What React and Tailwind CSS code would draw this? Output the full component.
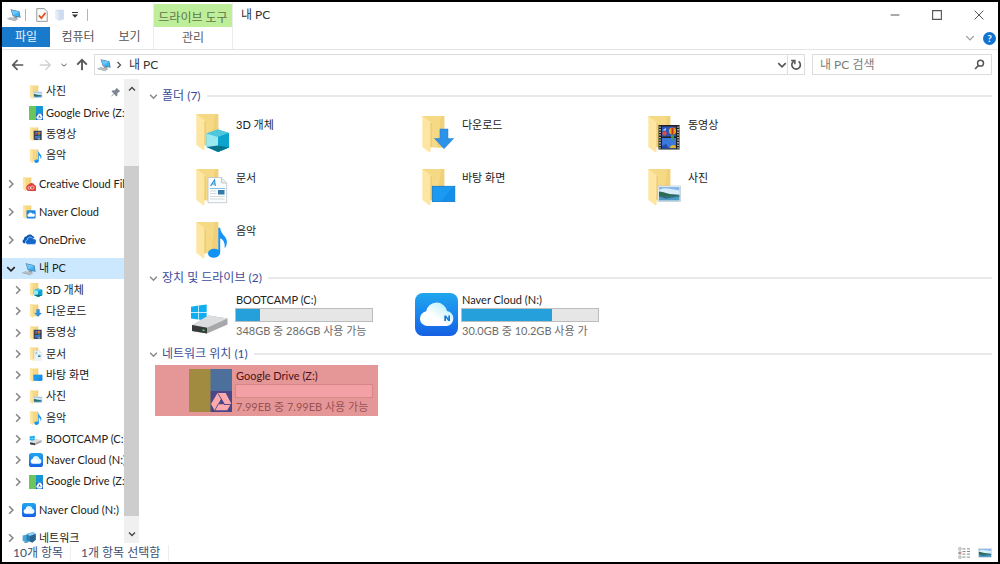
import React from "react";

function Svg({ box = "0 0 16 16", className, children }) {
  return (
    <svg viewBox={box} className={className} fill="none" aria-hidden="true">
      {children}
    </svg>
  );
}

/* ---------- folder emblems, drawn on a 43 x 43 canvas ---------- */

function CubeEmblem() {
  return (
    <g>
      <path d="M29 18.500 40 22v14.500L29 41 17.500 36V22.500z" fill="#1fb5d2" />
      <path d="M17.500 22.500 29 18.500 40 22 29 26z" fill="#4fc6df" />
      <path d="M17.500 22.500 29 26v15l-11.500-5z" fill="#9be9f0" />
      <path d="M29 26 40 22v14.500L29 41z" fill="#0da3cf" />
      <path d="M29 34.500 40 36.500 29 41 17.500 36z" fill="#08748c" />
    </g>
  );
}

function ArrowEmblem() {
  return <path d="M25 18h8v9.500h5.700L29 37.700 19.500 27.500H25z" fill="#2d93e8" stroke="#1f7fd0" strokeWidth="0.5" />;
}

function FilmEmblem() {
  return (
    <g>
      <rect x="17.500" y="14" width="21" height="24.500" fill="#20201f" />
      <path d="M19 15.500v22M37 15.500v22" stroke="#f3f3f3" strokeWidth="1.300" strokeDasharray="1.300 1.300" />
      <rect x="21" y="15.500" width="14" height="10" fill="#2a56bb" />
      <rect x="21" y="27" width="14" height="10.500" fill="#3a78dc" />
      <circle cx="31.500" cy="20" r="3.600" fill="#e8a21c" />
      <path d="M30.500 16.500h2v6.500l-1 1-1-1z" fill="#c9302c" />
      <path d="M30 24h3v4l-1.500 1.500L30 28z" fill="#3e9b45" />
      <circle cx="23.500" cy="22.500" r="2.200" fill="#dd4b3d" />
      <path d="M21 19.500 25 17v2.500z" fill="#b8cdf3" />
      <path d="M29 37c0-4 6-4 6 0z" fill="#e5b62b" />
      <path d="M21 35l4-2 3 4.500h-7z" fill="#234aa3" />
    </g>
  );
}

function DocumentEmblem() {
  return (
    <g>
      <path d="M19 13.500h13.500L37.700 19v19.700H19z" fill="#fafcfd" stroke="#b9c2c7" strokeWidth="0.800" />
      <path d="M32.500 13.500V19h5.200" fill="#e6edf0" stroke="#b9c2c7" strokeWidth="0.800" />
      <path d="M21.500 22 25.500 16l.8 6M23 20h3.200" stroke="#2090d0" strokeWidth="1.100" />
      <path d="M21 24.500h15" stroke="#7cc2e4" strokeWidth="1" />
      <rect x="29" y="26" width="6.500" height="4.500" fill="#2f7ba8" />
      <path d="M21 27h6.500M21 29.500h6.500M21 32.500h14.500M21 35h14.500" stroke="#cfd6da" strokeWidth="0.900" />
    </g>
  );
}

function DesktopEmblem() {
  return (
    <g>
      <rect x="17.300" y="22.300" width="22.500" height="15.300" fill="#1c9af2" stroke="#0f78c8" strokeWidth="0.800" />
      <path d="M26 37.300 38 22.700h1.500v14.600z" fill="#0c89e6" opacity="0.600" />
    </g>
  );
}

function PhotoEmblem() {
  return (
    <g>
      <rect x="17" y="22" width="22.500" height="15.500" fill="#f4f7f8" stroke="#b9c6cc" strokeWidth="0.700" />
      <rect x="18" y="23" width="20.500" height="9" fill="#86b8ee" />
      <path d="M18 26c4-2.500 8-2 12-1l8.500 1.500V30H18z" fill="#d8ecf9" />
      <path d="M18 27.500c3 0 6 1.500 9.500 2.200 3 .7 7 1 11 1.800v1.500H18z" fill="#2c6a52" />
      <path d="M18 32.500h20.500v4H18z" fill="#4b9ac6" />
      <path d="M18 32.500h20.500l-14 2z" fill="#2e6474" />
    </g>
  );
}

function MusicEmblem() {
  return (
    <path
      d="M29.300 10.700h1.800c.5 4 2.600 6.200 4.700 8.800 3 3.800 2.700 8.200-.3 12 .8-4.500-.4-8.500-4.300-10.200v13.900c0 3.100-2.800 5.500-6.500 5.500-3.300 0-5.700-1.700-5.700-4.200 0-2.700 2.900-4.700 6.300-4.700 1.500 0 2.900.3 4 .9z"
      fill="#1593f5"
    />
  );
}

function CreativeEmblem() {
  return (
    <g>
      <path d="M16 33a9 9 0 0 1 6-9 9.500 9.500 0 0 1 17 2A7.500 7.500 0 0 1 36 41H23a8 8 0 0 1-7-8z" fill="#e2403b" />
      <circle cx="24.500" cy="33" r="3.600" stroke="#fff" strokeWidth="1.600" />
      <circle cx="32.500" cy="32" r="4.300" stroke="#fff" strokeWidth="1.600" />
    </g>
  );
}

function NaverEmblem() {
  return (
    <g>
      <rect x="17" y="18" width="24" height="22" rx="3" fill="#1b86ea" />
      <path d="M21 35a4 4 0 0 1 1-7 6 6 0 0 1 11-1 4.500 4.500 0 0 1 4 8z" fill="#fff" />
    </g>
  );
}

const emblems = {
  cube: CubeEmblem,
  arrow: ArrowEmblem,
  film: FilmEmblem,
  document: DocumentEmblem,
  desktop: DesktopEmblem,
  photo: PhotoEmblem,
  music: MusicEmblem,
  creative: CreativeEmblem,
  naverBadge: NaverEmblem,
};

function FolderShape({ raised }) {
  return (
    <g transform={raised ? "translate(0 -2)" : undefined}>
      <path d="M7.300 5h22v31.500h-14z" fill="#f5d985" />
      <path d="M26 5h3.300v31.500H22z" fill="#ecca70" opacity="0.600" />
      <path d="M7.300 5 15 10.500c.7.500 1 1 1 2L15.500 41l-1.300.2L7.300 36z" fill="#fee5a2" />
      <path d="M16 12v24" stroke="#dfbb60" strokeWidth="0.700" />
    </g>
  );
}

function DriveGlyph() {
  return (
    <g>
      <path d="M2 13.700 9 12.600v6.700H2zM9.700 12.500l8-1.100v7.900h-8zM2 20h7v6.600l-7-1zM9.700 20h8v7.700l-8-1.100z" fill="#10aef0" />
      <path d="M3 32.500 19.500 22.500l19 3v6L18 40.500 3 38z" fill="#a6a8aa" />
      <path d="M3 32 19.500 22.500l19 3L18 34.700z" fill="#dcdddf" />
      <path d="M3 32 18 34.700v5.800L3 38z" fill="#37393b" />
      <path d="M13.500 36.300l2 .4v1.600l-2-.3z" fill="#45e05c" />
    </g>
  );
}

function CloudAppGlyph({ withLetter }) {
  return (
    <g>
      <defs>
        <linearGradient id="cloudTile" x1="0" y1="0" x2="0" y2="1">
          <stop offset="0" stopColor="#20a6ec" />
          <stop offset="0.500" stopColor="#1a85f0" />
          <stop offset="1" stopColor="#1560e2" />
        </linearGradient>
        <linearGradient id="cloudBody" x1="0" y1="1" x2="1" y2="0">
          <stop offset="0.400" stopColor="#ffffff" />
          <stop offset="1" stopColor="#a8ecfb" />
        </linearGradient>
      </defs>
      <rect width="43" height="43" rx="8" fill="url(#cloudTile)" />
      <path d="M12 33a7.400 7.400 0 0 1-.8-14.700A10.600 10.600 0 0 1 32 18a7.600 7.600 0 0 1 0 15z" fill="url(#cloudBody)" />
      {withLetter && <path d="M29.300 28v-5.500h1.800l2.200 3v-3H35V28h-1.800L31 25v3z" fill="#1b78d8" />}
    </g>
  );
}

function GoogleDriveGlyph({ left, top, corner, mark }) {
  return (
    <g>
      <rect width="22" height="43" fill={left} />
      <rect x="21.500" width="21.500" height="22" fill={top} />
      <rect x="21.500" y="22" width="21.500" height="21" fill={corner} />
      <path
        fillRule="evenodd"
        d="M28.500 24h8.200l5.500 10.500-4 6.800H25.500L22 35zM32.300 29.500l-3.300 5.800h6.400z"
        fill={mark}
      />
      <path d="M29 24.500l6.500 11M35 35.500h7M26 41l3.300-6" stroke={corner} strokeWidth="0.900" />
    </g>
  );
}

function PcGlyph() {
  return (
    <g>
      <path d="M11 4 38 10l4 20-24-5z" fill="#4a6f8f" />
      <path d="M13.500 6.500 36.500 11.500l3 16-20-4.500z" fill="#3db3f5" />
      <path d="M13.500 6.500 36.500 11.500 19.500 23z" fill="#6cc6f8" />
      <path d="M22 26l10 2.500-1 6-12-2z" fill="#8e9aa4" />
      <path d="M1 32l10-4 25 6-9 5z" fill="#b4bdc4" />
      <path d="M1 32l26 7v2L1 34z" fill="#7e8992" />
    </g>
  );
}

function OneDriveGlyph() {
  return (
    <g>
      <path d="M7 32a6.500 6.500 0 0 1-1-12.500A9 9 0 0 1 14 10a12 12 0 0 1 19-1 9 9 0 0 1 5 6z" fill="#0b57b5" />
      <path d="M17 35a7 7 0 0 1-1-13.800 9.500 9.500 0 0 1 18-3.700A8 8 0 0 1 37 35z" fill="#1268cf" stroke="#fff" strokeWidth="1.600" />
    </g>
  );
}

function NetworkGlyph() {
  return (
    <g>
      <path d="M2 14 22 10v22l-8 4L2 30z" fill="#4aa5d9" />
      <path d="M14 9 34 3l8 6v18l-10 8-18-6z" fill="#277fb8" />
      <path d="M14 9 34 3l8 6-17 6z" fill="#8fd0ef" />
      <path d="M25 15v18l7 2 10-8V9z" fill="#2b648f" />
      <path d="M8 33l14 4-6 4-10-3z" fill="#7f98a8" />
    </g>
  );
}

function Glyph({ kind, tinted, letter }) {
  if (kind === "drive") return <DriveGlyph />;
  if (kind === "cloud") return <CloudAppGlyph withLetter={letter} />;
  if (kind === "pc") return <PcGlyph />;
  if (kind === "onedrive") return <OneDriveGlyph />;
  if (kind === "network") return <NetworkGlyph />;
  if (kind === "google") {
    return tinted ? (
      <GoogleDriveGlyph left="#a18b40" top="#4d6f9c" corner="#4b4687" mark="#fba9ac" />
    ) : (
      <GoogleDriveGlyph left="#6cc55a" top="#1696d4" corner="#1463c4" mark="#ffffff" />
    );
  }
  const Emblem = emblems[kind];
  return (
    <g>
      <FolderShape raised={kind === "cube"} />
      <Emblem />
    </g>
  );
}

const fullCanvas = ["drive", "cloud", "pc", "onedrive", "network", "google"];

function SmallIcon({ kind }) {
  const box = fullCanvas.includes(kind) ? "0 0 43 43" : "5 4 37 37";
  return (
    <Svg box={box} className="size-3.5 shrink-0">
      <Glyph kind={kind} />
    </Svg>
  );
}

function Chevron({ className, d = "M5 2l6 6-6 6" }) {
  return (
    <Svg className={className}>
      <path d={d} stroke="currentColor" strokeWidth="2.600" />
    </Svg>
  );
}
const down = "M2 5l6 6 6-6";
const up = "M2 11l6-6 6 6";

/* ---------- window chrome ---------- */

function TitleArea() {
  return (
    <header className="flex h-12 shrink-0 items-stretch border-b border-[#e4e5e6]">
      <div className="flex w-[151px] flex-col">
        <div className="flex h-[25px] items-center pl-[5px]">
          <Svg box="0 0 43 43" className="size-3.5"><PcGlyph /></Svg>
          <i className="ml-1 h-3 w-px bg-[#b5b5b5]" />
          <button aria-label="속성" className="ml-[9px]">
            <Svg className="size-3.5">
              <path d="M2 .7h8.500L14 4v11.300H2z" fill="#fafafa" stroke="#8a8f94" />
              <path d="M4.500 8.500 7.300 11.500 12 5.500" stroke="#e5501e" strokeWidth="2" />
            </Svg>
          </button>
          <button aria-label="새 폴더" className="ml-1">
            <Svg className="size-3.5">
              <path d="M3 2h9.500v11l-6 1.500L3 12z" fill="#cfdcef" />
              <path d="M3 2l3.500 2v10.500L3 12z" fill="#e3ebf7" />
            </Svg>
          </button>
          <button aria-label="빠른 실행 도구 모음 사용자 지정" className="ml-1">
            <Svg className="size-2">
              <path d="M2 3h12" stroke="#333" strokeWidth="2" />
              <path d="M2 7h12l-6 6.500z" fill="#333" />
            </Svg>
          </button>
          <i className="ml-2 h-3 w-px bg-[#b5b5b5]" />
        </div>
        <nav className="flex h-5 text-xs text-[#555]">
          <button className="w-12 bg-[#1979ca] text-[#e8f4ff]">파일</button>
          <button className="w-14">컴퓨터</button>
          <button className="w-[47px]">보기</button>
        </nav>
      </div>
      <div className="flex w-20 flex-col border-x border-[#ececec] text-[#5a5a5a]">
        <div className="mt-0.5 flex h-[23px] items-center justify-center bg-[#bfee9a] pt-1 text-xs leading-4 whitespace-nowrap text-[#5c7549]">드라이브 도구</div>
        <button className="h-[22px] text-xs">관리</button>
      </div>
      <h1 className="flex h-[25px] items-center pl-2 text-xs text-[#333]">내 PC</h1>
      <div className="ml-auto flex flex-col items-end">
        <div className="flex h-[25px] items-center gap-8 pr-[14px] text-[#555]">
          <button aria-label="최소화"><Svg className="size-2.5"><path d="M1 8h14" stroke="currentColor" strokeWidth="1.600" /></Svg></button>
          <button aria-label="최대화"><Svg className="size-2.5"><path d="M1 1h14v14H1z" stroke="currentColor" strokeWidth="1.800" /></Svg></button>
          <button aria-label="닫기"><Svg className="size-2.5"><path d="M1 1l14 14M15 1 1 15" stroke="currentColor" strokeWidth="1.600" /></Svg></button>
        </div>
        <div className="flex h-[22px] items-center gap-2 pr-0.5">
          <button aria-label="리본 확장" className="text-[#999]"><Svg className="size-2.5"><path d={down} stroke="currentColor" strokeWidth="2" /></Svg></button>
          <button aria-label="도움말" className="size-[13px] rounded-full bg-[#1173d2] text-center text-[10px] leading-[13px] font-bold text-white">?</button>
        </div>
      </div>
    </header>
  );
}

function AddressRow() {
  return (
    <div className="flex h-[29px] shrink-0 items-center pr-1.5 pl-[9px] text-xs text-[#555]">
      <button aria-label="뒤로"><Svg className="size-3.5"><path d="M14 8H2M7.500 2.500 2 8l5.500 5.500" stroke="currentColor" strokeWidth="1.900" /></Svg></button>
      <button aria-label="앞으로" className="ml-[13px] text-[#d0d0d0]"><Svg className="size-3.5"><path d="M2 8h12M8.500 2.500 14 8l-5.500 5.500" stroke="currentColor" strokeWidth="1.500" /></Svg></button>
      <button aria-label="최근 위치" className="ml-[9px]"><Chevron className="size-1.5" d="M1 5l7 6 7-6" /></button>
      <button aria-label="위로" className="ml-2"><Svg className="size-3.5"><path d="M8 14V2M2.500 7.500 8 2l5.500 5.500" stroke="currentColor" strokeWidth="2.100" /></Svg></button>
      <div className="ml-[5px] flex h-[21px] flex-1 items-center border border-[#dcdcdc] pl-0.5">
        <Svg box="0 0 43 43" className="size-3.5"><PcGlyph /></Svg>
        <Chevron className="ml-1 size-2" />
        <a href="#pc" className="ml-1.5 text-[#333]">내 PC</a>
        <button aria-label="이전 위치" className="ml-auto"><Chevron className="size-2.5" d={down} /></button>
        <button aria-label="새로 고침" className="flex h-full w-[17px] items-center justify-center border-l border-[#dcdcdc]">
          <Svg className="size-3">
            <path d="M11.500 3.200A5.700 5.700 0 1 1 5 3" stroke="currentColor" strokeWidth="2.200" />
            <path d="M1.500 2h5V7" stroke="currentColor" strokeWidth="2" />
          </Svg>
        </button>
      </div>
      <label className="ml-[7px] flex h-[21px] w-[180px] items-center border border-[#dcdcdc] pr-1.5 pl-[7px]">
        <input aria-label="내 PC 검색" placeholder="내 PC 검색" className="min-w-0 flex-1 bg-transparent outline-none placeholder:text-[#7b7b7b]" />
        <Svg className="size-[11px]">
          <circle cx="9.500" cy="6" r="4.300" stroke="currentColor" strokeWidth="2.200" />
          <path d="M6.500 9.500 1.500 14.500" stroke="currentColor" strokeWidth="2.400" />
        </Svg>
      </label>
    </div>
  );
}

/* ---------- navigation tree ---------- */

const tree = [
  { items: [
    { label: "사진", kind: "photo", child: true, leaf: true, pinned: true },
    { label: "Google Drive (Z:)", kind: "google", child: true, leaf: true },
    { label: "동영상", kind: "film", child: true, leaf: true },
    { label: "음악", kind: "music", child: true, leaf: true },
  ] },
  { items: [{ label: "Creative Cloud Files", kind: "creative" }] },
  { items: [{ label: "Naver Cloud", kind: "naverBadge" }] },
  { items: [{ label: "OneDrive", kind: "onedrive" }] },
  { items: [
    { label: "내 PC", kind: "pc", open: true },
    { label: "3D 개체", kind: "cube", child: true },
    { label: "다운로드", kind: "arrow", child: true },
    { label: "동영상", kind: "film", child: true },
    { label: "문서", kind: "document", child: true },
    { label: "바탕 화면", kind: "desktop", child: true },
    { label: "사진", kind: "photo", child: true },
    { label: "음악", kind: "music", child: true },
    { label: "BOOTCAMP (C:)", kind: "drive", child: true },
    { label: "Naver Cloud (N:)", kind: "cloud", child: true },
    { label: "Google Drive (Z:)", kind: "google", child: true },
  ] },
  { items: [{ label: "Naver Cloud (N:)", kind: "cloud" }] },
  { items: [{ label: "네트워크", kind: "network" }] },
];

function TreeRow({ item }) {
  return (
    <li className={item.open ? "flex flex-1 bg-[#cce8ff]" : "flex flex-1"}>
      <a href="#tree" className={item.child ? "flex min-w-0 flex-1 items-center gap-0.5 pl-[11px]" : "flex min-w-0 flex-1 items-center gap-0.5 pl-1"}>
        <span className="flex w-3.5 shrink-0">
          {!item.leaf && <Chevron className={item.open ? "size-2.5 text-[#222]" : "size-2.5 text-[#888]"} d={item.open ? down : undefined} />}
        </span>
        <SmallIcon kind={item.kind} />
        <span className="min-w-0 flex-1 overflow-hidden pl-px whitespace-nowrap">{item.label}</span>
        {item.pinned && (
          <Svg className="mr-[3px] size-2.5 text-[#7d8791]">
            <path d="M9 1l6 6-2 .5-3 3 .3 3L8.500 15 5 11 1 15l-.5-.5L4.500 10.500 1 7l1.500-1.800 3 .3 3-3z" fill="currentColor" />
          </Svg>
        )}
      </a>
    </li>
  );
}

function Sidebar() {
  return (
    <aside className="flex w-[137px] shrink-0 overflow-hidden">
      <nav className="flex min-w-0 flex-1 overflow-hidden pt-0.5">
        <div className="-mb-1.5 flex min-w-0 flex-1 flex-col gap-[7px]">
          {tree.map((group, i) => (
            <ul key={i} className="flex flex-col" style={{ flex: `${group.items.length} 1 0` }}>
              {group.items.map((item) => <TreeRow key={item.label} item={item} />)}
            </ul>
          ))}
        </div>
      </nav>
      <div className="flex w-[15px] flex-col bg-[#f0f0f0] text-[#444]">
        <button aria-label="위로 스크롤" className="flex h-5 items-center justify-center"><Chevron className="size-2" d={up} /></button>
        <div className="grow" />
        <div className="h-[350px] bg-[#cdcdcd]" />
        <button aria-label="아래로 스크롤" className="flex h-[27px] items-center justify-center pt-2"><Chevron className="size-2" d={down} /></button>
      </div>
    </aside>
  );
}

/* ---------- content ---------- */

const folders = [
  { label: "3D 개체", kind: "cube" },
  { label: "다운로드", kind: "arrow" },
  { label: "동영상", kind: "film" },
  { label: "문서", kind: "document" },
  { label: "바탕 화면", kind: "desktop" },
  { label: "사진", kind: "photo" },
  { label: "음악", kind: "music" },
];

const drives = [
  { label: "BOOTCAMP (C:)", kind: "drive", note: "348GB 중 286GB 사용 가능", used: 18 },
  { label: "Naver Cloud (N:)", kind: "cloud", note: "30.0GB 중 10.2GB 사용 가", used: 66 },
];

const locations = [
  { label: "Google Drive (Z:)", kind: "google", note: "7.99EB 중 7.99EB 사용 가능", used: 0, marked: true },
];

function Section({ title, count, children }) {
  return (
    <section>
      <h2 className="flex h-[22px] items-center pl-2.5 text-xs text-[#3a4c9b]">
        <Chevron className="size-[9px] text-[#888]" d={down} />
        <span className="pl-1">{title} ({count})</span>
        <span className="ml-1.5 h-0.5 flex-1 bg-[#e9e9eb]" />
      </h2>
      <ul className="grid grid-cols-[repeat(auto-fill,223px)] gap-x-[3px] gap-y-0.5 pl-4">{children}</ul>
    </section>
  );
}

function TileIcon({ kind, tinted }) {
  return (
    <span className="flex w-[77px] shrink-0 items-center justify-end">
      <Svg box="0 0 43 43" className="size-[43px]"><Glyph kind={kind} tinted={tinted} letter /></Svg>
    </span>
  );
}

function FolderTile({ item }) {
  return (
    <li>
      <a href="#folder" className="flex h-[51px] gap-1">
        <TileIcon kind={item.kind} />
        <span className="pt-2.5 leading-4">{item.label}</span>
      </a>
    </li>
  );
}

function DriveTile({ item }) {
  const m = item.marked;
  return (
    <li>
      <a href="#drive" className={m ? "flex h-[51px] gap-[3px] bg-[#e49796] text-[#4c1416]" : "flex h-[51px] gap-[3px]"}>
        <TileIcon kind={item.kind} tinted={m} />
        <span className="flex w-[138px] flex-col pt-[3px]">
          <span className="pl-px leading-4">{item.label}</span>
          <span className={m ? "h-3.5 border border-[#d98686] bg-[#f3a1a4]" : "h-3.5 border border-[#bcbcbc] bg-[#e6e6e6]"}>
            <span className="block h-full bg-[#26a0da]" style={{ width: `${item.used}%` }} />
          </span>
          <span className={m ? "pt-px pl-px leading-4 whitespace-nowrap text-[#9a5356]" : "pt-px pl-px leading-4 whitespace-nowrap text-[#6d6d6d]"}>{item.note}</span>
        </span>
      </a>
    </li>
  );
}

function Content() {
  return (
    <main className="flex min-w-0 flex-1 flex-col gap-[3px] overflow-hidden pt-1.5 pr-1.5">
      <Section title="폴더" count={7}>{folders.map((f) => <FolderTile key={f.label} item={f} />)}</Section>
      <Section title="장치 및 드라이브" count={2}>{drives.map((d) => <DriveTile key={d.label} item={d} />)}</Section>
      <Section title="네트워크 위치" count={1}>{locations.map((d) => <DriveTile key={d.label} item={d} />)}</Section>
    </main>
  );
}

function StatusBar() {
  return (
    <footer className="flex h-[19px] shrink-0 items-center pr-1.5 pl-[11px] text-xs text-[#3c4f70]">
      <span className="w-[58px] border-r border-[#eee] leading-4">10개 항목</span>
      <span className="border-r border-[#eee] pr-2 pl-2.5 leading-4">1개 항목 선택함</span>
      <span className="ml-auto flex gap-2">
        <button aria-label="자세히">
          <Svg className="size-3">
            <path d="M1 1h3v3H1zM1 6.500h3v3H1zM1 12h3v3H1z" stroke="#999" />
            <path d="M1.500 7h2v2h-2z" fill="#d9534f" />
            <path d="M6 2.500h4M12 2.500h4M6 6h4M12 6h4M6 9.500h4M12 9.500h4M6 13.500h4M12 13.500h4" stroke="#888" strokeWidth="1.300" />
          </Svg>
        </button>
        <button aria-label="큰 아이콘">
          <Svg box="16.500 21.500 23.500 16.500" className="h-3 w-3.5"><PhotoEmblem /></Svg>
        </button>
      </span>
    </footer>
  );
}

export default function App() {
  return (
    <div className="flex h-screen flex-col overflow-hidden border-2 border-black bg-white font-[Lato,'Noto_Sans_CJK_KR',sans-serif] text-[11px] text-[#222]">
      <TitleArea />
      <AddressRow />
      <div className="flex min-h-0 flex-1">
        <Sidebar />
        <Content />
      </div>
      <StatusBar />
    </div>
  );
}
